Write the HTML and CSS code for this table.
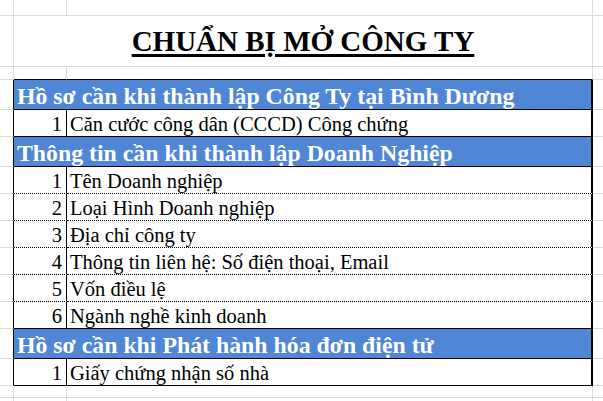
FILE: index.html
```html
<!DOCTYPE html>
<html lang="vi">
<head>
<meta charset="utf-8">
<title>Chuẩn bị mở công ty</title>
<link rel="stylesheet" href="styles.css">
</head>
<body>
<div class="sheet">
  <div class="row r-top"><div class="c a"></div><div class="c b"></div><div class="c cc"></div><div class="c d"></div></div>
  <div class="row r-title"><div class="c a"></div><div class="c title">CHUẨN BỊ MỞ CÔNG TY</div><div class="c d"></div></div>
  <div class="row r-gap"><div class="c a"></div><div class="c b tb"></div><div class="c cc tb"></div><div class="c d"></div></div>

  <div class="row r-head"><div class="c a edge"></div><div class="c head">Hồ sơ cần khi thành lập Công Ty tại Bình Dương</div><div class="c d"></div></div>
  <div class="row r-data"><div class="c a edge"></div><div class="c b num solid">1</div><div class="c cc txt solid">Căn cước công dân (CCCD) Công chứng</div><div class="c d"></div></div>

  <div class="row r-head"><div class="c a edge"></div><div class="c head">Thông tin cần khi thành lập Doanh Nghiệp</div><div class="c d"></div></div>
  <div class="row r-data"><div class="c a edge"></div><div class="c b num">1</div><div class="c cc txt">Tên Doanh nghiệp</div><div class="c d"></div></div>
  <div class="row r-data"><div class="c a edge"></div><div class="c b num">2</div><div class="c cc txt">Loại Hình Doanh nghiệp</div><div class="c d"></div></div>
  <div class="row r-data"><div class="c a edge"></div><div class="c b num">3</div><div class="c cc txt">Địa chỉ công ty</div><div class="c d"></div></div>
  <div class="row r-data"><div class="c a edge"></div><div class="c b num">4</div><div class="c cc txt">Thông tin liên hệ: Số điện thoại, Email</div><div class="c d"></div></div>
  <div class="row r-data"><div class="c a edge"></div><div class="c b num">5</div><div class="c cc txt">Vốn điều lệ</div><div class="c d"></div></div>
  <div class="row r-data"><div class="c a edge"></div><div class="c b num solid">6</div><div class="c cc txt solid">Ngành nghề kinh doanh</div><div class="c d"></div></div>

  <div class="row r-head"><div class="c a edge"></div><div class="c head">Hồ sơ cần khi Phát hành hóa đơn điện tử</div><div class="c d"></div></div>
  <div class="row r-data"><div class="c a edge"></div><div class="c b num solid">1</div><div class="c cc txt solid">Giấy chứng nhận số nhà</div><div class="c d"></div></div>

  <div class="row r-after"><div class="c a"></div><div class="c b"></div><div class="c cc"></div><div class="c d"></div></div>
  <div class="row r-end"><div class="c a"></div><div class="c b"></div><div class="c cc"></div><div class="c d"></div></div>
</div>
</body>
</html>
```

FILE: styles.css
```css
html, body {
  margin: 0;
  padding: 0;
  background: #ffffff;
}

.sheet {
  width: 603px;
  height: 401px;
  overflow: hidden;
  display: flex;
  flex-direction: column;
  font-family: "Liberation Serif", "Times New Roman", serif;
  color: #000000;
}

.row {
  display: grid;
  grid-template-columns: 14px 53px 526px 1fr;
  flex: none;
}

.c {
  box-sizing: border-box;
  border-right: 1px solid #dadada;
  border-bottom: 1px solid #dadada;
  min-width: 0;
  white-space: nowrap;
}

.d {
  border-right: none;
}

.r-top { height: 16px; }
.r-title { height: 51px; }
.r-gap { height: 13px; }
.r-head { height: 30px; }
.r-data { height: 27px; }
.r-after { height: 12px; }
.r-end { height: 10px; }

.tb {
  border-bottom-color: #000000;
}

.edge {
  border-right-color: #000000;
}

.title {
  grid-column: 2 / 4;
  display: flex;
  align-items: center;
  justify-content: center;
  font-weight: bold;
  font-size: 29px;
  padding-bottom: 0;
  text-decoration: underline;
  text-decoration-thickness: 3px;
  text-underline-offset: 3px;
}

.head {
  grid-column: 2 / 4;
  background: #4f86d6;
  color: #ffffff;
  font-weight: bold;
  font-size: 23.8px;
  line-height: 1.05;
  display: flex;
  align-items: flex-end;
  padding-left: 3px;
  border-right: 2px solid #000000;
  border-bottom: 1px solid #000000;
}

.num,
.txt {
  font-size: 20.5px;
  line-height: 1.1;
  display: flex;
  align-items: flex-end;
  border-bottom: 1px dotted #000000;
}

.num {
  justify-content: flex-end;
  padding-right: 4px;
  border-right: 1px solid #000000;
}

.txt {
  padding-left: 3px;
  border-right: 2px solid #000000;
}

.solid {
  border-bottom-style: solid;
}
```
